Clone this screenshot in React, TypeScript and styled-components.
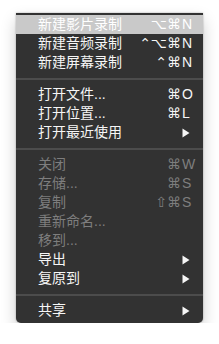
import styled, { createGlobalStyle } from 'styled-components';

const GlobalStyle = createGlobalStyle`
  html, body {
    margin: 0;
    padding: 0;
    background: #ffffff;
  }
`;

const Page = styled.div`
  padding: 13px 0 0 16px;
`;

const Menu = styled.div`
  width: 187px;
  box-sizing: border-box;
  padding: 2px 0 3px;
  background-color: #323232;
  border-radius: 0 0 5px 5px;
  box-shadow: 0 7px 16px rgba(0, 0, 0, 0.2), 0 0 2px rgba(0, 0, 0, 0.35);
  font-family: "Liberation Sans", "Noto Sans CJK SC", sans-serif;
  font-size: 14px;
  user-select: none;
`;

const Item = styled.div<{ $disabled?: boolean; $active?: boolean }>`
  display: flex;
  align-items: center;
  height: 19px;
  line-height: 19px;
  padding: 0 6px 0 22px;
  color: ${p => (p.$active ? '#ffffff' : p.$disabled ? '#7e7e7e' : '#f6f6f6')};
  background-color: ${p => (p.$active ? '#c9c9c9' : 'transparent')};
`;

const Label = styled.span`
  flex: 1;
  white-space: nowrap;
`;

const Mods = styled.span`
  font-family: "DejaVu Sans", sans-serif;
  font-size: 14px;
  text-align: right;
  margin-right: 1px;
  white-space: nowrap;
`;

const Key = styled.span`
  width: 15px;
  font-family: "Liberation Sans", "DejaVu Sans", sans-serif;
  display: flex;
  align-items: center;
`;

const Separator = styled.div`
  height: 13px;
  display: flex;
  align-items: center;

  &::after {
    content: '';
    flex: 1;
    height: 2px;
    background-color: #4c4c4c;
  }
`;

const Arrow = () => (
  <svg width="8" height="10" viewBox="0 0 8 10">
    <path d="M0.5 0.5 L7.5 5 L0.5 9.5 Z" fill="currentColor" />
  </svg>
);

type Entry =
  | { sep: true }
  | { label: string; mods?: string; key?: string; sub?: boolean; disabled?: boolean; active?: boolean };

const entries: Entry[] = [
  { label: '新建影片录制', mods: '⌥⌘', key: 'N', active: true },
  { label: '新建音频录制', mods: '⌃⌥⌘', key: 'N' },
  { label: '新建屏幕录制', mods: '⌃⌘', key: 'N' },
  { sep: true },
  { label: '打开文件...', mods: '⌘', key: 'O' },
  { label: '打开位置...', mods: '⌘', key: 'L' },
  { label: '打开最近使用', sub: true },
  { sep: true },
  { label: '关闭', mods: '⌘', key: 'W', disabled: true },
  { label: '存储...', mods: '⌘', key: 'S', disabled: true },
  { label: '复制', mods: '⇧⌘', key: 'S', disabled: true },
  { label: '重新命名...', disabled: true },
  { label: '移到...', disabled: true },
  { label: '导出', sub: true },
  { label: '复原到', sub: true },
  { sep: true },
  { label: '共享', sub: true },
];

export default function App() {
  return (
    <>
      <GlobalStyle />
      <Page>
        <Menu>
          {entries.map((e, i) =>
            'sep' in e ? (
              <Separator key={i} />
            ) : (
              <Item key={i} $disabled={e.disabled} $active={e.active}>
                <Label>{e.label}</Label>
                {e.mods && <Mods>{e.mods}</Mods>}
                <Key>{e.sub ? <Arrow /> : e.key}</Key>
              </Item>
            )
          )}
        </Menu>
      </Page>
    </>
  );
}
